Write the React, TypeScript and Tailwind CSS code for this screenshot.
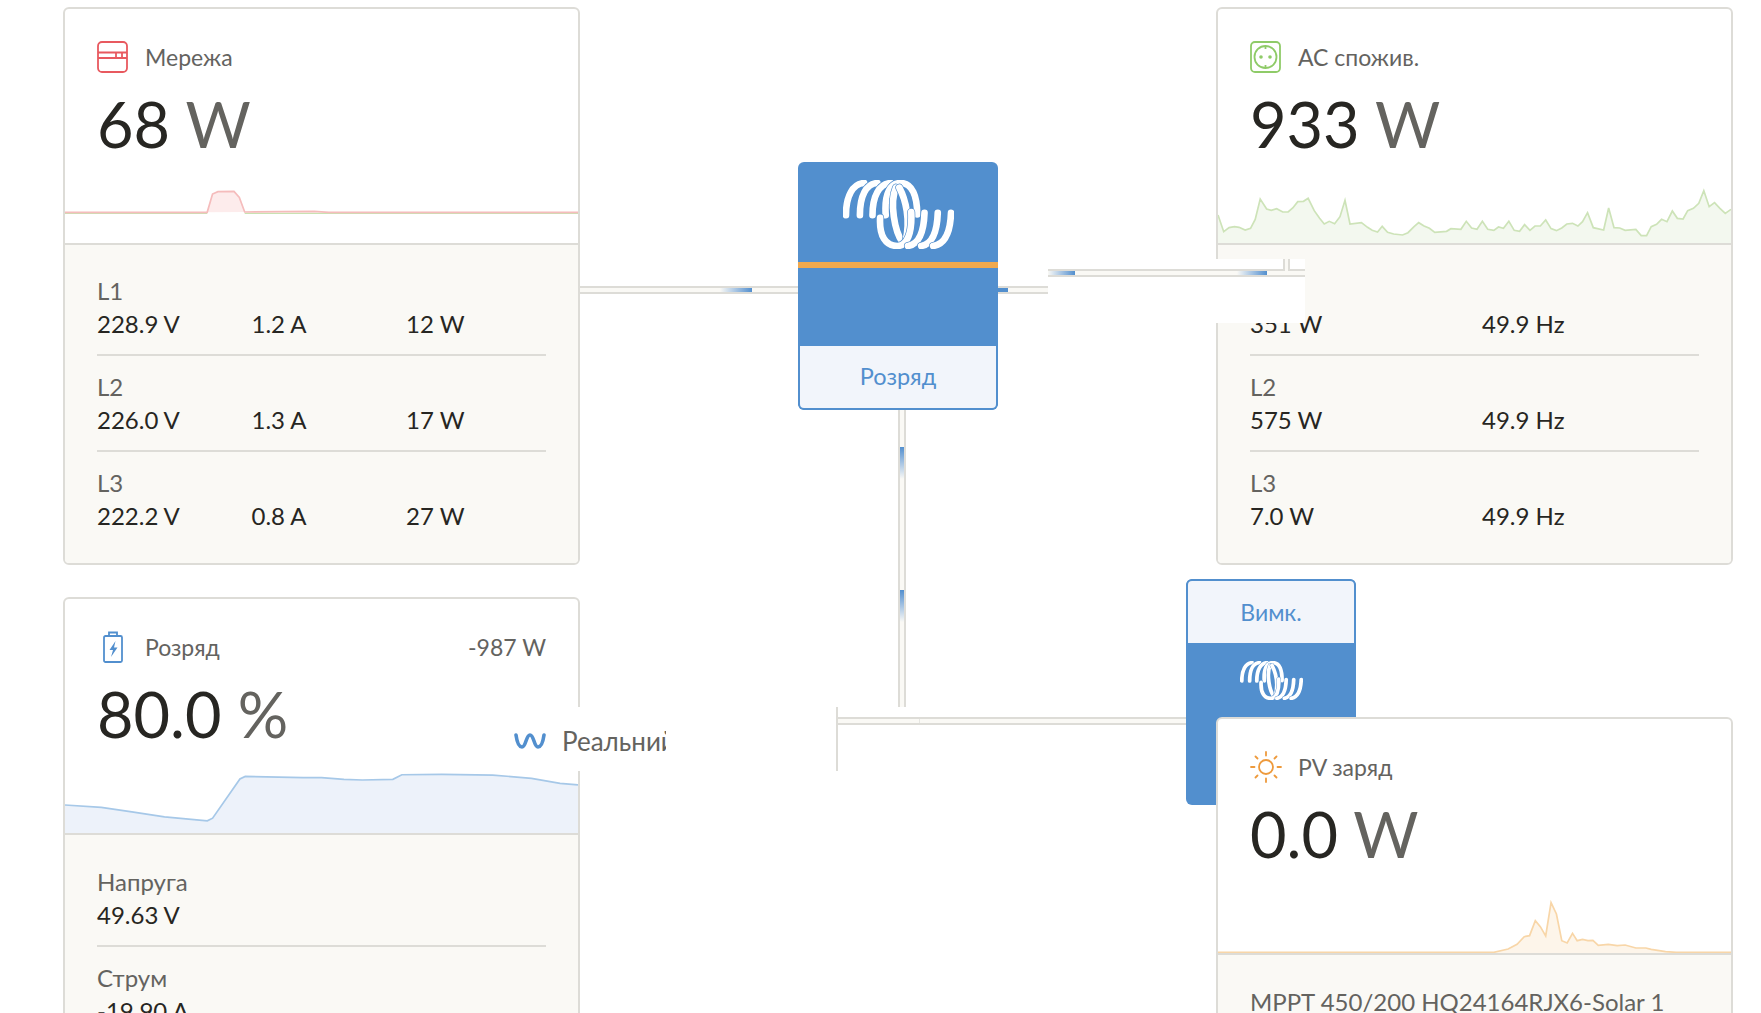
import React from "react";

const LOGO = [
  "M165 187 C165 130 185 92 220 90",
  "M207 187 C207 130 225 92 260 90",
  "M245 187 C245 130 265 92 300 90",
  "M285 187 C280 120 300 90 330 90 C365 90 380 130 380 185",
  "M316 104 C296 150 312 236 335 268",
  "M326 104 C345 140 360 200 345 266",
  "M268 195 C265 250 285 280 320 280 C350 280 365 240 362 178",
  "M402 180 C400 240 385 275 352 280",
  "M442 180 C440 240 425 275 392 280",
  "M482 180 C480 240 465 275 428 280",
];

function Logo({ className }: { className: string }) {
  return (
    <svg viewBox="156 81 335 208" className={className} fill="none" strokeLinecap="round">
      {LOGO.map((d, i) => (
        <g key={i}>
          <path d={d} stroke="#528fce" strokeWidth="24" />
          <path d={d} stroke="#ffffff" strokeWidth="20" />
        </g>
      ))}
    </svg>
  );
}

function GridIcon() {
  return (
    <svg viewBox="0 0 31 32" className="h-[32px] w-[31px]" fill="none" stroke="#e8595f" strokeWidth="1.8">
      <rect x="1" y="1" width="29" height="30" rx="4" />
      <path d="M1 11.5H30M1 17H30M19 11.5V17M25 11.5V17" />
    </svg>
  );
}

function SocketIcon() {
  return (
    <svg viewBox="0 0 31 32" className="h-[32px] w-[31px]" fill="none" stroke="#8fcb68" strokeWidth="1.8">
      <rect x="1" y="1" width="29" height="30" rx="4" />
      <circle cx="15.5" cy="16" r="11" />
      <path d="M15.5 5V8M15.5 24V27" />
      <circle cx="11" cy="16" r="1.8" fill="#8fcb68" stroke="none" />
      <circle cx="20" cy="16" r="1.8" fill="#8fcb68" stroke="none" />
    </svg>
  );
}

function BatteryIcon() {
  return (
    <svg viewBox="0 0 31 32" className="h-[32px] w-[31px]" fill="none" stroke="#528fce" strokeWidth="1.8">
      <rect x="7" y="5" width="18" height="26" rx="1.5" />
      <path d="M12 5V1.5H20V5" />
      <path d="M18.5 10 L12.5 19 H16 L14 26 L20.5 16.5 H17 Z" fill="#528fce" stroke="none" />
    </svg>
  );
}

function SunIcon() {
  return (
    <svg viewBox="0 0 32 32" className="h-[32px] w-[32px]" fill="none" stroke="#ee9a3c" strokeWidth="1.8" strokeLinecap="round">
      <circle cx="16" cy="16" r="7" />
      <path d="M16 1V4.5M16 27.5V31M1 16H4.5M27.5 16H31M5.5 5.5L7.5 7.5M24.5 24.5L26.5 26.5M5.5 26.5L7.5 24.5M24.5 7.5L26.5 5.5" />
    </svg>
  );
}

function WaveIcon() {
  return (
    <svg viewBox="0 0 32 16" className="h-[16px] w-[32px] shrink-0" fill="none" stroke="#528fce" strokeWidth="3.6" strokeLinecap="round">
      <path d="M2 2C3 9 5 14 8 14C12 14 12 2 16 2C20 2 20 14 24 14C27 14 29 9 30 2" />
    </svg>
  );
}

type P = [number, number][];
const str = (p: P) => p.map((q) => q.join(",")).join(" ");

function Spark({ viewBox, line, fill, stroke, bg, base, under }: { viewBox: string; line: P; fill: string; stroke: string; bg?: P; base: number; under?: string }) {
  const area: P = bg ?? [[line[0][0], base], ...line, [line[line.length - 1][0], base]];
  return (
    <svg viewBox={viewBox} preserveAspectRatio="none" className="block h-[80px] w-full">
      <polygon points={str(area)} fill={fill} />
      {under && <path d={under} fill="none" stroke="#c9e2b2" strokeWidth="1.2" vectorEffect="non-scaling-stroke" />}
      <polyline points={str(line)} fill="none" stroke={stroke} strokeWidth="1.7" vectorEffect="non-scaling-stroke" />
    </svg>
  );
}

const AC: P = [[49,645],[65,695],[80,683],[95,680],[108,682],[125,690],[140,685],[153,658],[167,597],[185,627],[198,631],[213,626],[230,636],[245,636],[258,624],[272,605],[288,604],[301,595],[318,632],[333,655],[346,672],[360,664],[375,671],[390,650],[404,601],[418,672],[450,668],[467,682],[480,691],[495,696],[508,679],[523,697],[540,702],[565,705],[580,698],[597,680],[610,668],[625,678],[640,685],[655,697],[688,694],[700,686],[728,688],[743,664],[758,684],[773,688],[788,664],[803,688],[820,691],[833,681],[847,685],[862,664],[877,691],[892,694],[906,674],[921,691],[935,678],[950,678],[965,660],[980,686],[995,692],[1010,684],[1024,672],[1040,670],[1055,678],[1068,665],[1082,638],[1098,683],[1127,690],[1141,624],[1156,683],[1172,684],[1187,691],[1217,688],[1232,707],[1247,707],[1260,680],[1275,673],[1289,658],[1304,665],[1319,633],[1333,655],[1349,657],[1362,632],[1378,625],[1393,610],[1407,572],[1422,620],[1437,608],[1452,625],[1467,640],[1483,628]];
const PV: P = [[49,727],[820,727],[860,717],[885,703],[905,680],[920,677],[936,632],[950,650],[965,678],[980,578],[995,612],[1010,692],[1025,699],[1040,670],[1053,692],[1068,688],[1083,692],[1097,691],[1112,706],[1140,703],[1165,707],[1187,705],[1217,714],[1245,714],[1260,718],[1300,725],[1330,727],[1483,727]];
const BAT: P = [[36,644],[125,651],[200,665],[280,680],[385,692],[398,684],[465,565],[478,557],[620,561],[665,561],[720,566],[765,568],[840,566],[862,552],[960,551],[1085,553],[1180,563],[1250,578],[1294,583]];
const GRID: P = [[42,637],[440,637],[455,582],[470,575],[515,574],[530,592],[545,636],[650,635],[740,634],[780,637],[1478,637]];
const GRID_AREA: P = [[440,637],[455,582],[470,575],[515,574],[530,592],[545,636]];

function Head({ icon, title, value, unit, right }: { icon: React.ReactNode; title: string; value: string; unit: string; right?: string }) {
  return (
    <div className="px-[32px] pt-[32px]">
      <div className="flex h-[32px] items-center">
        <span className="w-[48px] shrink-0">{icon}</span>
        <span className="text-[23px] text-[#64635f]">{title}</span>
        {right && <span className="ml-auto text-[23px] text-[#64635f]">{right}</span>}
      </div>
      <div className="mt-[15px] h-[75px] text-[63px] leading-[72px] text-[#272622]">
        {value} <span className="text-[#64635f]">{unit}</span>
      </div>
    </div>
  );
}

function Row({ label, values, cols, last }: { label: string; values: string[]; cols: string; last?: boolean }) {
  return (
    <div className={last ? "" : "mb-[14px] border-b-2 border-[#dddcd7] pb-[14px]"}>
      <div className="text-[24px] leading-[33px] text-[#64635f]">{label}</div>
      <div className={`grid text-[24px] leading-[33px] text-[#272622] ${cols}`}>
        {values.map((v, i) => (
          <div key={i}>{v}</div>
        ))}
      </div>
    </div>
  );
}

function Card({ children, className }: { children: React.ReactNode; className?: string }) {
  return <div className={`overflow-hidden rounded-[6px] border-2 border-[#dddcd7] bg-white ${className ?? ""}`}>{children}</div>;
}

function Body({ children, top }: { children: React.ReactNode; top: string }) {
  return <div className={`border-t-2 border-[#dddcd7] bg-[#faf9f5] px-[32px] pb-[31px] ${top}`}>{children}</div>;
}

const gridCols = "grid-cols-[154.5px_154.5px_1fr]";
const acCols = "grid-cols-[232px_1fr]";

function Pipe({ className }: { className: string }) {
  return <div className={`absolute border-[#dddcd7] bg-[#faf9f5] ${className}`} />;
}

export default function App() {
  return (
    <div className="relative h-[1013px] w-full overflow-hidden bg-white" style={{ fontFamily: "Lato, 'Noto Sans', sans-serif" }}>
      {/* diagram links and device boxes, behind the cards */}
      <Pipe className="left-[580px] top-[286px] h-[8px] w-[470px] border-y-2" />
      <div className="absolute left-[720px] top-[288px] h-[4px] w-[32px] bg-gradient-to-r from-[#faf9f5] to-[#528fce]" />
      <div className="absolute left-[998px] top-[288px] h-[4px] w-[10px] bg-[#528fce]" />
      <Pipe className="left-[898px] top-[410px] h-[297px] w-[8px] border-x-2" />
      <div className="absolute left-[900px] top-[447px] h-[32px] w-[4px] bg-gradient-to-b from-[#528fce] to-[#faf9f5]" />
      <div className="absolute left-[900px] top-[590px] h-[32px] w-[4px] bg-gradient-to-b from-[#528fce] to-[#faf9f5]" />
      <Pipe className="left-[837px] top-[717px] h-[8px] w-[350px] border-y-2" />
      <div className="absolute left-[836px] top-[707px] h-[64px] w-[2px] bg-[#dddcd7]" />
      <div className="absolute left-[919px] top-[719px] h-[4px] w-[1px] bg-[#e6e6e2]" />

      <div className="absolute left-[798px] top-[162px] flex h-[248px] w-[200px] flex-col overflow-hidden rounded-[6px] bg-[#528fce]">
        <div className="flex h-[100px] items-center justify-center pt-[5px]">
          <Logo className="h-[69px] w-[111px]" />
        </div>
        <div className="h-[6px] bg-[#f0a94e]" />
        <div className="h-[78px]" />
        <div className="flex flex-1 items-center justify-center rounded-b-[6px] border-x-2 border-b-2 border-[#528fce] bg-[#f2f5fb] text-[23.5px] text-[#528fce]">Розряд</div>
      </div>

      <div className="absolute left-[1186px] top-[579px] flex h-[226px] w-[170px] flex-col overflow-hidden rounded-[6px] bg-[#528fce]">
        <div className="flex h-[64px] items-center justify-center rounded-t-[6px] border-x-2 border-t-2 border-[#528fce] bg-[#f2f5fb] text-[23px] text-[#528fce]">Вимк.</div>
        <div className="flex justify-center pt-[18px]">
          <Logo className="h-[39px] w-[63px]" />
        </div>
      </div>

      {/* cards */}
      <div className="relative z-10 flex items-start justify-between pl-[63px] pr-[28px] pt-[7px]">
        <div className="flex w-[517px] flex-col gap-[32px]">
          <Card>
            <Head icon={<GridIcon />} title="Мережа" value="68" unit="W" />
            <Spark viewBox="42 489 1436 240" line={GRID} bg={GRID_AREA} fill="#fdecec" stroke="#f5bcbc" base={637} under="M42 640H440M545 640H1478" />
            <Body top="pt-[29px]">
              <Row label="L1" values={["228.9 V", "1.2 A", "12 W"]} cols={gridCols} />
              <Row label="L2" values={["226.0 V", "1.3 A", "17 W"]} cols={gridCols} />
              <Row label="L3" values={["222.2 V", "0.8 A", "27 W"]} cols={gridCols} last />
            </Body>
          </Card>
          <Card>
            <Head icon={<BatteryIcon />} title="Розряд" value="80.0" unit="%" right="-987 W" />
            <Spark viewBox="36 486 1258 243" line={BAT} fill="#edf2fa" stroke="#a6c8e8" base={729} />
            <Body top="pt-[30px]">
              <Row label="Напруга" values={["49.63 V"]} cols="grid-cols-1" />
              <Row label="Струм" values={["-19.90 A"]} cols="grid-cols-1" last />
            </Body>
          </Card>
        </div>
        <div className="flex w-[517px] flex-col gap-[152px]">
          <Card>
            <Head icon={<SocketIcon />} title="АС спожив." value="933" unit="W" />
            <Spark viewBox="49 489 1434 240" line={AC} fill="#f3f8ef" stroke="#cde3b8" base={729} />
            <Body top="pt-[29px]">
              <Row label="L1" values={["351 W", "49.9 Hz"]} cols={acCols} />
              <Row label="L2" values={["575 W", "49.9 Hz"]} cols={acCols} />
              <Row label="L3" values={["7.0 W", "49.9 Hz"]} cols={acCols} last />
            </Body>
          </Card>
          <Card>
            <Head icon={<SunIcon />} title="PV заряд" value="0.0" unit="W" />
            <Spark viewBox="49 489 1434 240" line={PV} fill="#fdf5ea" stroke="#f8d6a8" base={729} />
            <Body top="pt-[30px]">
              <div className="text-[24px] leading-[33px] text-[#64635f]">MPPT 450/200 HQ24164RJX6-Solar 1</div>
            </Body>
          </Card>
        </div>
      </div>

      {/* overlays: white cut-outs lying over the cards */}
      <div className="absolute left-[1048px] top-[259px] z-20 h-[64px] w-[257px] overflow-hidden bg-white">
        <Pipe className="left-0 top-[10px] h-[8px] w-[257px] border-y-2" />
        <div className="absolute left-[235px] top-0 h-[12px] w-[2px] bg-[#dddcd7]" />
        <div className="absolute left-[240px] top-0 h-[12px] w-[2px] bg-[#dddcd7]" />
        <div className="absolute left-[237px] top-0 h-[16px] w-[3px] bg-[#faf9f5]" />
        <div className="absolute left-0 top-[12px] h-[4px] w-[27px] bg-gradient-to-r from-[#faf9f5] to-[#528fce]" />
        <div className="absolute left-[189px] top-[12px] h-[4px] w-[30px] bg-gradient-to-r from-[#faf9f5] to-[#528fce]" />
      </div>
      <div className="absolute left-[500px] top-[707px] z-20 flex h-[64px] w-[166px] items-center gap-[16px] overflow-hidden whitespace-nowrap bg-white pl-[14px] pt-[4px] text-[26px] text-[#64635f]">
        <WaveIcon />
        <span>Реальний</span>
      </div>
    </div>
  );
}
